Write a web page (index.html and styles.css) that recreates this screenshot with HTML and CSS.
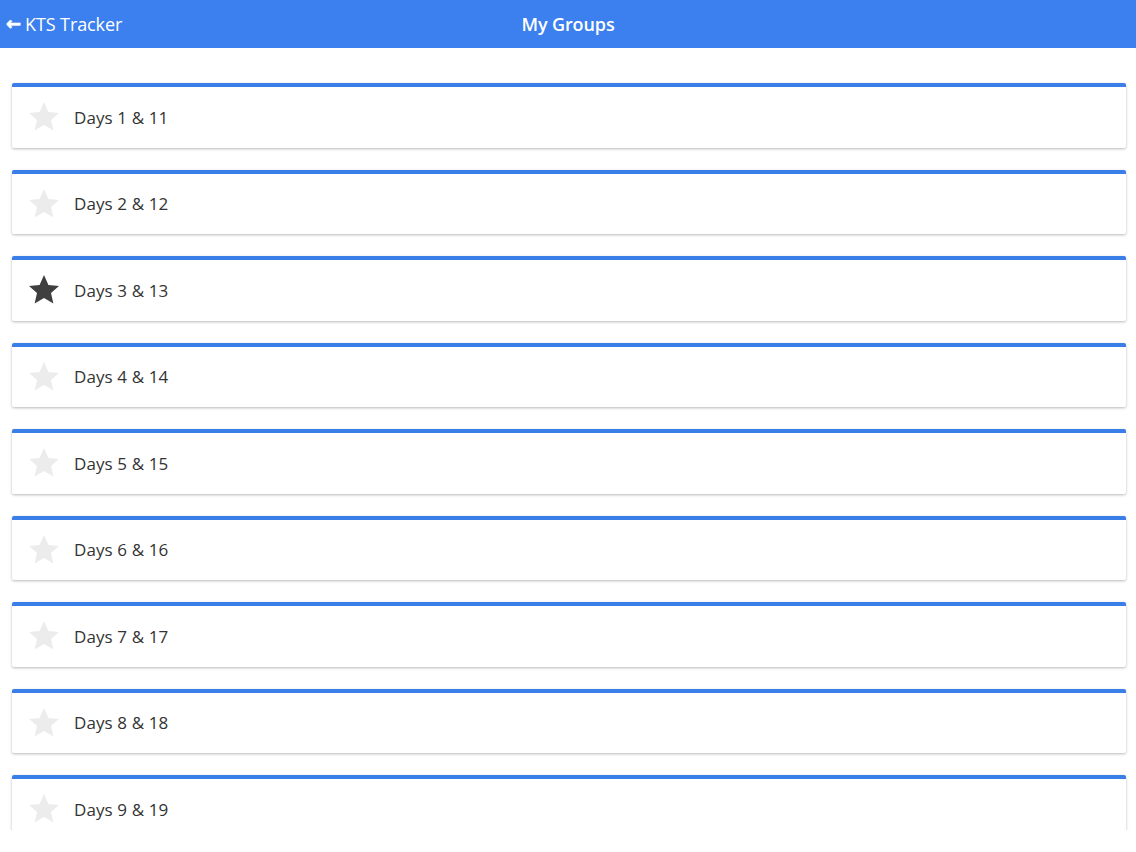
FILE: index.html
```html
<!DOCTYPE html>
<html>
<head>
<meta charset="utf-8">
<link rel="stylesheet" href="styles.css">
</head>
<body>
<header class="bar">
  <div class="back"><span class="arrow">&#8592;</span>KTS Tracker</div>
  <div class="title">My Groups</div>
</header>
<main class="content">
  <div class="card"><svg class="star" viewBox="0 0 24 24"><path d="M12 2l2.94 6.6 7.06.7-5.33 4.7 1.58 7L12 17.3 5.75 21l1.58-7L2 9.3l7.06-.7z"/></svg><span class="label">Days 1 &amp; 11</span></div>
  <div class="card"><svg class="star" viewBox="0 0 24 24"><path d="M12 2l2.94 6.6 7.06.7-5.33 4.7 1.58 7L12 17.3 5.75 21l1.58-7L2 9.3l7.06-.7z"/></svg><span class="label">Days 2 &amp; 12</span></div>
  <div class="card"><svg class="star on" viewBox="0 0 24 24"><path d="M12 2l2.94 6.6 7.06.7-5.33 4.7 1.58 7L12 17.3 5.75 21l1.58-7L2 9.3l7.06-.7z"/></svg><span class="label">Days 3 &amp; 13</span></div>
  <div class="card"><svg class="star" viewBox="0 0 24 24"><path d="M12 2l2.94 6.6 7.06.7-5.33 4.7 1.58 7L12 17.3 5.75 21l1.58-7L2 9.3l7.06-.7z"/></svg><span class="label">Days 4 &amp; 14</span></div>
  <div class="card"><svg class="star" viewBox="0 0 24 24"><path d="M12 2l2.94 6.6 7.06.7-5.33 4.7 1.58 7L12 17.3 5.75 21l1.58-7L2 9.3l7.06-.7z"/></svg><span class="label">Days 5 &amp; 15</span></div>
  <div class="card"><svg class="star" viewBox="0 0 24 24"><path d="M12 2l2.94 6.6 7.06.7-5.33 4.7 1.58 7L12 17.3 5.75 21l1.58-7L2 9.3l7.06-.7z"/></svg><span class="label">Days 6 &amp; 16</span></div>
  <div class="card"><svg class="star" viewBox="0 0 24 24"><path d="M12 2l2.94 6.6 7.06.7-5.33 4.7 1.58 7L12 17.3 5.75 21l1.58-7L2 9.3l7.06-.7z"/></svg><span class="label">Days 7 &amp; 17</span></div>
  <div class="card"><svg class="star" viewBox="0 0 24 24"><path d="M12 2l2.94 6.6 7.06.7-5.33 4.7 1.58 7L12 17.3 5.75 21l1.58-7L2 9.3l7.06-.7z"/></svg><span class="label">Days 8 &amp; 18</span></div>
  <div class="card"><svg class="star" viewBox="0 0 24 24"><path d="M12 2l2.94 6.6 7.06.7-5.33 4.7 1.58 7L12 17.3 5.75 21l1.58-7L2 9.3l7.06-.7z"/></svg><span class="label">Days 9 &amp; 19</span></div>
</main>
</body>
</html>
```
FILE: styles.css
```css
html, body {
  margin: 0;
  padding: 0;
  background: #ffffff;
  font-family: "Open Sans", "Noto Sans", "Liberation Sans", sans-serif;
}
.bar {
  height: 48px;
  background: #3b80ee;
  color: #ffffff;
  display: flex;
  align-items: center;
  position: relative;
}
.back {
  display: flex;
  align-items: center;
  padding-left: 6px;
  font-size: 18px;
  letter-spacing: -0.1px;
}
.arrow {
  font-size: 18px;
  margin-right: 4px;
  font-weight: 700;
  font-family: "DejaVu Sans", sans-serif;
  line-height: 1;
  -webkit-text-stroke: 0.6px #ffffff;
}
.title {
  position: absolute;
  left: 0;
  right: 0;
  text-align: center;
  font-size: 18px;
  font-weight: 600;
  pointer-events: none;
  letter-spacing: -0.1px;
}
.content {
  height: 782px;
  overflow: hidden;
  padding: 35px 10px 0 12px;
  box-sizing: border-box;
}
.card {
  height: 64.5px;
  box-sizing: border-box;
  border-top: 4px solid #3a7ee8;
  background: #ffffff;
  box-shadow: 0 1px 3px rgba(0, 0, 0, 0.28);
  border-radius: 2px;
  margin-bottom: 22px;
  display: flex;
  align-items: center;
  padding-left: 14px;
}
.star {
  width: 36px;
  height: 36px;
  fill: #ececec;
  margin-right: 12px;
}
.star.on {
  fill: #3f3f3f;
}
.label {
  font-size: 17px;
  color: #333333;
  letter-spacing: 0.1px;
}
```
